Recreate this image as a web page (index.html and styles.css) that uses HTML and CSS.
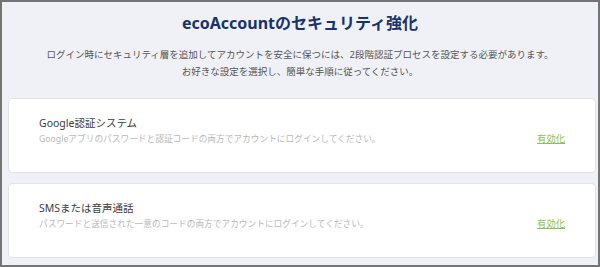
FILE: index.html
```html
<!DOCTYPE html>
<html lang="ja">
<head>
    <meta charset="UTF-8">
    <meta name="viewport" content="width=device-width, initial-scale=1.0">
    <title>ecoAccountのセキュリティ強化</title>
    <link rel="stylesheet" href="styles.css">
</head>
<body>
    <div class="page">
        <div class="header">
            <h1>ecoAccountのセキュリティ強化</h1>
            <p class="intro">ログイン時にセキュリティ層を追加してアカウントを安全に保つには、2段階認証プロセスを設定する必要があります。<br>お好きな設定を選択し、簡単な手順に従ってください。</p>
        </div>

        <div class="methods">
            <div class="method-card">
                <div class="method-info">
                    <div class="method-title">Google認証システム</div>
                    <div class="method-desc">Googleアプリのパスワードと認証コードの両方でアカウントにログインしてください。</div>
                </div>
                <a href="#" class="enable-link">有効化</a>
            </div>

            <div class="method-card">
                <div class="method-info">
                    <div class="method-title">SMSまたは音声通話</div>
                    <div class="method-desc">パスワードと送信された一意のコードの両方でアカウントにログインしてください。</div>
                </div>
                <a href="#" class="enable-link">有効化</a>
            </div>
        </div>
    </div>
</body>
</html>
```

FILE: styles.css
```css
html, body {
    margin: 0;
    height: 100%;
}
body {
    font-family: "Noto Sans", "Noto Sans CJK JP", sans-serif;
    background: #f0f1f6;
}
.page {
    box-sizing: border-box;
    height: 267px;
    border: 2px solid #747474;
    background: #f0f1f6;
}
.header {
    text-align: center;
    padding-top: 11px;
}
h1 {
    margin: 0;
    font-size: 16px;
    line-height: 20px;
    font-weight: 700;
    color: #17336a;
}
.intro {
    margin: 13px 0 0;
    font-size: 9.5px;
    line-height: 17px;
    color: #555;
}
.methods {
    display: flex;
    flex-direction: column;
    gap: 10px;
    padding: 18px 2px 0 6px;
}
.method-card {
    display: flex;
    align-items: flex-end;
    justify-content: space-between;
    height: 75px;
    box-sizing: border-box;
    padding: 17px 30px 26px 30px;
    background: white;
    border: 1px solid #e2e3e8;
    border-radius: 4px;
}
.method-title {
    font-size: 10.5px;
    line-height: 15px;
    color: #3d3d3d;
    margin-bottom: 1px;
}
.method-desc {
    font-size: 8.7px;
    line-height: 14px;
    color: #b9b9b9;
}
.enable-link {
    font-size: 9.3px;
    line-height: 14px;
    color: #8cc152;
    text-decoration: underline;
}
```
